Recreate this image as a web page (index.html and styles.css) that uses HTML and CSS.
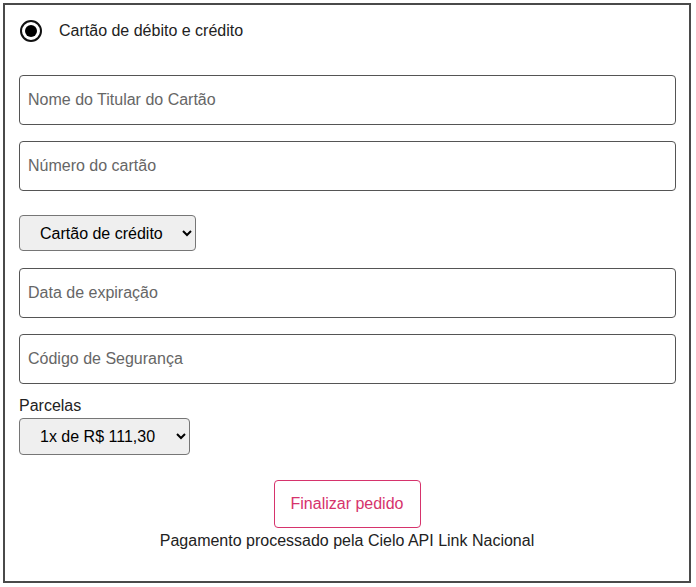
FILE: index.html
```html
<!DOCTYPE html>
<html lang="pt">
<head>
<meta charset="utf-8">
<link rel="stylesheet" href="styles.css">
</head>
<body>
<form class="payment">
  <label class="method">
    <span class="radio"><span class="radio-dot"></span></span>
    <span class="method-text">Cartão de débito e crédito</span>
  </label>
  <input class="field field-first" type="text" placeholder="Nome do Titular do Cartão">
  <input class="field field-second" type="text" placeholder="Número do cartão">
  <select class="select select-type">
    <option>Cartão de crédito</option>
  </select>
  <input class="field field-third" type="text" placeholder="Data de expiração">
  <input class="field field-fourth" type="text" placeholder="Código de Segurança">
  <label class="parcelas-label">Parcelas</label>
  <select class="select select-parcelas">
    <option>1x de R$ 111,30</option>
  </select>
  <div class="actions">
    <button type="button" class="submit">Finalizar pedido</button>
    <p class="note">Pagamento processado pela Cielo API Link Nacional</p>
  </div>
</form>
</body>
</html>
```
FILE: styles.css
```css
html, body {
  margin: 0;
  padding: 0;
  background: #fff;
}
body {
  font-family: "Liberation Sans", Arial, sans-serif;
  font-size: 16px;
  color: #222;
}
.payment {
  margin: 3px;
  width: 688px;
  height: 580px;
  box-sizing: border-box;
  border: 2px solid #4a4a4a;
  padding: 0 0 0 14px;
  display: flex;
  flex-direction: column;
  align-items: flex-start;
}
.method {
  display: flex;
  align-items: center;
  margin-top: 14px;
  height: 24px;
}
.radio {
  width: 22px;
  height: 22px;
  box-sizing: border-box;
  border: 2px solid #111;
  border-radius: 50%;
  display: flex;
  align-items: center;
  justify-content: center;
  margin-left: 1px;
}
.radio-dot {
  width: 12px;
  height: 12px;
  border-radius: 50%;
  background: #000;
}
.method-text {
  margin-left: 17px;
  color: #222;
  font-size: 16px;
}
.field {
  width: 657px;
  height: 50px;
  box-sizing: border-box;
  border: 1px solid #555;
  border-radius: 4px;
  padding: 0 8px;
  font-family: "Liberation Sans", Arial, sans-serif;
  font-size: 16px;
  color: #222;
  background: #fff;
  outline: none;
}
.field::placeholder {
  color: #666;
}
.field-first { margin-top: 32px; }
.field-second { margin-top: 16px; }
.field-third { margin-top: 17px; }
.field-fourth { margin-top: 16px; }
.select {
  height: 36px;
  box-sizing: border-box;
  border: 1px solid #767676;
  border-radius: 4px;
  background-color: #efefef;
  font-family: "Liberation Sans", Arial, sans-serif;
  font-size: 16px;
  color: #000;
  padding: 0 4px 0 16px;
}
.select-type {
  width: 177px;
  margin-top: 24px;
}
.parcelas-label {
  margin-top: 12px;
  height: 19px;
  line-height: 19px;
  color: #222;
}
.select-parcelas {
  width: 171px;
  height: 37px;
  margin-top: 3px;
}
.actions {
  align-self: stretch;
  margin-left: -14px;
  display: flex;
  flex-direction: column;
  align-items: center;
  margin-top: 25px;
}
.submit {
  width: 147px;
  height: 48px;
  border: 1px solid #d6336c;
  border-radius: 4px;
  background: #fff;
  color: #d6336c;
  font-family: "Liberation Sans", Arial, sans-serif;
  font-size: 16px;
  padding: 0;
}
.note {
  margin: 3px 0 0;
  color: #222;
  font-size: 16px;
  line-height: 19px;
}
```
